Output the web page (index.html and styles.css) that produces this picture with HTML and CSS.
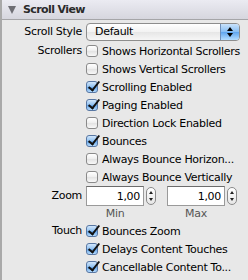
FILE: index.html
```html
<!DOCTYPE html>
<html lang="en">

<head>
    <meta charset="UTF-8">
    <title>Scroll View</title>
    <link rel="stylesheet" href="styles.css">
</head>

<body>
    <div class="panel">
        <div class="header">
            <span class="disclosure"></span>
            <span class="title">Scroll View</span>
        </div>
        <div class="form">
            <div class="label popup-label">Scroll Style</div>
            <div class="popup">
                <span class="popup-text">Default</span>
                <span class="popup-arrows">
                    <svg width="8" height="12" viewBox="0 0 8 12">
                        <path d="M4 1 L7 5 L1 5 Z M4 11 L7 7 L1 7 Z" fill="#000" />
                    </svg>
                </span>
            </div>

            <div class="label">Scrollers</div>
            <div class="checks">
                <label class="check"><span class="box"></span>Shows Horizontal Scrollers</label>
                <label class="check"><span class="box"></span>Shows Vertical Scrollers</label>
                <label class="check on"><span class="box"></span>Scrolling Enabled</label>
                <label class="check on"><span class="box"></span>Paging Enabled</label>
                <label class="check"><span class="box"></span>Direction Lock Enabled</label>
                <label class="check on"><span class="box"></span>Bounces</label>
                <label class="check"><span class="box"></span>Always Bounce Horizon...</label>
                <label class="check"><span class="box"></span>Always Bounce Vertically</label>
            </div>

            <div class="label zoom-label">Zoom</div>
            <div class="zoom">
                <div class="num">
                    <div class="field">1,00</div>
                    <span class="stepper"></span>
                    <div class="caption">Min</div>
                </div>
                <div class="num">
                    <div class="field">1,00</div>
                    <span class="stepper"></span>
                    <div class="caption">Max</div>
                </div>
            </div>

            <div class="label">Touch</div>
            <div class="checks">
                <label class="check on"><span class="box"></span>Bounces Zoom</label>
                <label class="check on"><span class="box"></span>Delays Content Touches</label>
                <label class="check on"><span class="box"></span>Cancellable Content To...</label>
            </div>
        </div>
    </div>
</body>

</html>
```

FILE: styles.css
```css
* {
    padding: 0;
    margin: 0;
    box-sizing: border-box;
}

body {
    width: 248px;
    height: 280px;
    overflow: hidden;
    font-family: "DejaVu Sans", Verdana, sans-serif;
    font-size: 11px;
    letter-spacing: -0.3px;
    color: #000;
    background-color: #e8e8e8;
}

.panel {
    height: 280px;
    border-left: 2px solid #a9a9a9;
    background-color: #e8e8e8;
}

/* header */
.header {
    height: 20px;
    display: flex;
    align-items: center;
    background: linear-gradient(#ebebf2, #d6d6de);
    border-bottom: 1px solid #a5a5a8;
}

.disclosure {
    width: 0;
    height: 0;
    margin-left: 6px;
    margin-right: 7px;
    border-left: 4.5px solid transparent;
    border-right: 4.5px solid transparent;
    border-top: 8px solid #6e6e74;
}

.title {
    font-weight: bold;
    font-size: 11px;
    letter-spacing: -0.6px;
    color: #2a2a2a;
}

/* form grid */
.form {
    display: grid;
    grid-template-columns: 80px 1fr;
    column-gap: 4px;
    padding-top: 3px;
    padding-right: 9px;
}

.label {
    text-align: right;
    height: 18px;
    line-height: 18px;
    white-space: nowrap;
}

.popup-label {
    margin-bottom: 1px;
}

.zoom-label {
    height: 20px;
    line-height: 20px;
}

/* popup button */
.popup {
    height: 18px;
    margin-bottom: 1px;
    display: flex;
    border: 1px solid #8d8d8d;
    border-radius: 4px;
    background: linear-gradient(#ffffff, #f2f2f2 50%, #e6e6e6 51%, #f6f6f6);
    overflow: hidden;
}

.popup-text {
    flex: 1;
    padding-left: 8px;
    line-height: 16px;
    font-size: 11px;
}

.popup-arrows {
    width: 19px;
    display: flex;
    align-items: center;
    justify-content: center;
    border-left: 1px solid #6f8fb9;
    background: linear-gradient(#c9e2fb, #86bdf3 50%, #5ea4ee 51%, #b4ddff);
}

/* checkboxes */
.checks {
    display: flex;
    flex-direction: column;
}

.check {
    height: 18px;
    display: flex;
    align-items: center;
    white-space: nowrap;
}

.box {
    width: 12px;
    height: 12px;
    margin-right: 4px;
    border: 1px solid #8a8a8a;
    border-radius: 3px;
    background: linear-gradient(#ffffff, #eeeeee 50%, #e2e2e2 51%, #f8f8f8);
    position: relative;
}

.check.on .box {
    border-color: #5877a3;
    background: linear-gradient(#d3e7fb, #8ec0f1 50%, #63a5ea 51%, #b3d9fc);
}

/* check mark */
.check.on .box::after {
    content: "";
    position: absolute;
    left: 4px;
    top: -3px;
    width: 4px;
    height: 10px;
    border-right: 2.5px solid #111;
    border-bottom: 2px solid #111;
    transform: rotate(38deg);
}

/* zoom fields */
.zoom {
    display: flex;
    gap: 11px;
}

.num {
    display: grid;
    grid-template-columns: 58px 10px;
    column-gap: 2px;
}

.field {
    height: 20px;
    line-height: 19px;
    text-align: right;
    padding-right: 3px;
    background-color: #fff;
    border: 1px solid #9a9a9a;
    border-top-color: #6c6c6c;
}

.stepper {
    width: 10px;
    height: 18px;
    margin-top: 1px;
    border: 1px solid #8a8a8a;
    border-radius: 5px;
    background: linear-gradient(#ffffff, #e6e6e6);
    position: relative;
}

.stepper::before,
.stepper::after {
    content: "";
    position: absolute;
    left: 2px;
    border-left: 2px solid transparent;
    border-right: 2px solid transparent;
}

.stepper::before {
    top: 3px;
    border-bottom: 3px solid #222;
}

.stepper::after {
    bottom: 3px;
    border-top: 3px solid #222;
}

.caption {
    grid-column: 1;
    text-align: center;
    height: 16px;
    line-height: 16px;
    color: #555;
}
```
